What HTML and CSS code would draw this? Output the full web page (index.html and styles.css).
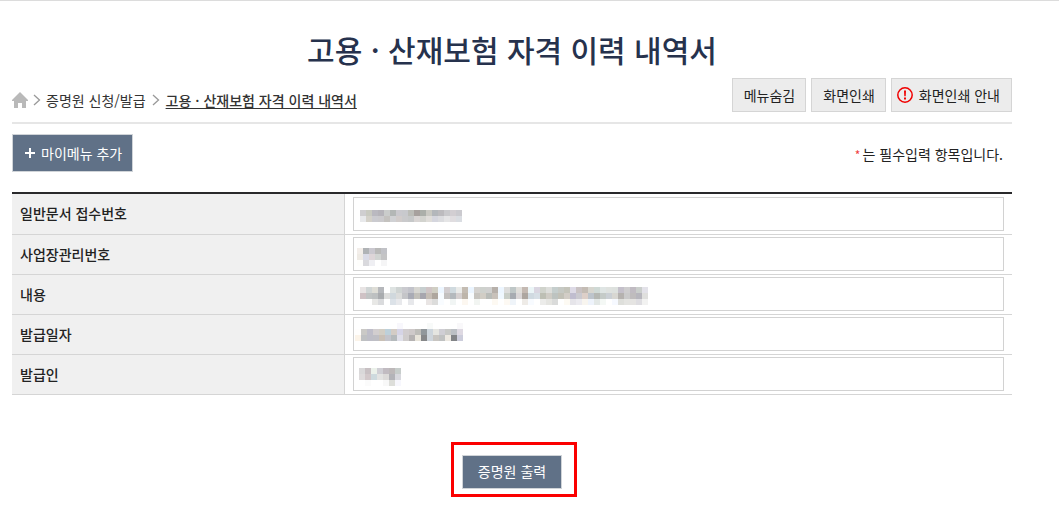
FILE: index.html
```html
<!DOCTYPE html>
<html lang="ko">
<head>
<meta charset="utf-8">
<title>고용 · 산재보험 자격 이력 내역서</title>
<link rel="stylesheet" href="styles.css">
</head>
<body>
<main class="page">
  <h1 class="title">고용 · 산재보험 자격 이력 내역서</h1>
  <header class="bar">
    <nav class="crumbs" aria-label="현재 위치">
      <a class="home" href="#" aria-label="홈">
        <svg width="16" height="16" viewBox="0 0 16 16"><path fill="#b9b9b9" d="M8 0 16 8v1h-2v7h-4v-5H6v5H2V9H0V8z"/></svg>
      </a>
      <svg class="sep" width="8" height="12" viewBox="0 0 8 12"><path d="M1 1 6.500 6 1 11"/></svg>
      <a class="crumb" href="#">증명원 신청/발급</a>
      <svg class="sep" width="8" height="12" viewBox="0 0 8 12"><path d="M1 1 6.500 6 1 11"/></svg>
      <a class="crumb current" href="#">고용 · 산재보험 자격 이력 내역서</a>
    </nav>
    <div class="tools">
      <button class="tool" type="button">메뉴숨김</button>
      <button class="tool" type="button">화면인쇄</button>
      <button class="tool guide" type="button">
        <svg width="16" height="16" viewBox="0 0 16 16"><circle cx="8" cy="8" r="7.200" fill="none" stroke="#f00000" stroke-width="1.500"/><path fill="#f00000" d="M7 3.500h2l-.3 5.800H7.300zM7 10.500h2v2H7z"/></svg>
        화면인쇄 안내
      </button>
    </div>
  </header>
  <div class="subbar">
    <button class="action add" type="button">
      <svg width="10" height="10" viewBox="0 0 10 10"><path fill="#fff" d="M4 0h2v4h4v2H6v4H4V6H0V4h4z"/></svg>
      마이메뉴 추가
    </button>
    <p class="note"><span class="star">*</span>는 필수입력 항목입니다.</p>
  </div>
  <table class="form">
    <tr><th scope="row"><label for="f1">일반문서 접수번호</label></th><td><div class="field"><input id="f1" type="text" readonly><svg class="mosaic m1" data-mosaic="receipt"></svg></div></td></tr>
    <tr><th scope="row"><label for="f2">사업장관리번호</label></th><td><div class="field"><input id="f2" type="text" readonly><svg class="mosaic m2" data-mosaic="site"></svg></div></td></tr>
    <tr><th scope="row"><label for="f3">내용</label></th><td><div class="field"><input id="f3" type="text" readonly><svg class="mosaic m3" data-mosaic="content"></svg></div></td></tr>
    <tr><th scope="row"><label for="f4">발급일자</label></th><td><div class="field"><input id="f4" type="text" readonly><svg class="mosaic m4" data-mosaic="date"></svg></div></td></tr>
    <tr><th scope="row"><label for="f5">발급인</label></th><td><div class="field"><input id="f5" type="text" readonly><svg class="mosaic m5" data-mosaic="issuer"></svg></div></td></tr>
  </table>
  <div class="submit">
    <div class="highlight"><button class="action print" type="button">증명원 출력</button></div>
  </div>
</main>
<script src="mosaic.js"></script>
</body>
</html>
```
FILE: styles.css
```css
* { box-sizing: border-box; }
body {
  margin: 0;
  border-top: 1px solid #dcdcdc;
  background: #fff;
  color: #222;
  font: 14px/20px "Noto Sans CJK KR", sans-serif;
}
button, input { font: inherit; color: inherit; margin: 0; border-radius: 0; }
svg { display: block; flex: none; }
.page { padding: 26px 47px 15px 12px; }
.title {
  margin: 0;
  color: #26324d;
  font-size: 30px;
  line-height: 44px;
  font-weight: 500;
  text-align: center;
}
.bar {
  display: flex;
  justify-content: space-between;
  align-items: flex-start;
  margin-top: 7px;
  padding-bottom: 10px;
  border-bottom: 2px solid #e6e6e6;
}
.crumbs { display: flex; align-items: center; padding-top: 12px; }
.crumb { color: #333; text-decoration: none; }
.current { font-weight: 500; text-decoration: underline; text-underline-offset: 2px; }
.sep { margin: 0 5px; fill: none; stroke: #999; stroke-width: 1.3; }
.crumb + .sep { margin: 0 6px; }
.tools { display: flex; gap: 5px; }
.tool {
  display: flex;
  align-items: center;
  justify-content: center;
  gap: 6px;
  height: 34px;
  padding: 0 10px 0 11px;
  border: 1px solid #d5d5d5;
  background: #ececec;
  white-space: nowrap;
}
.guide { padding: 0 11px 0 5px; }
.subbar { display: flex; justify-content: space-between; align-items: center; margin-top: 10px; }
.action {
  display: flex;
  align-items: center;
  gap: 6px;
  border: 1px solid #d0d4d8;
  background: #607187;
  color: #fff;
  white-space: nowrap;
}
.add { height: 38px; padding: 0 10px 1px 12px; }
.print { height: 34px; padding: 0 15px 2px; }
.note { margin: 3px 9px 0 0; }
.star { color: #f04040; font-size: 12px; margin-right: 2px; }
.form {
  width: 100%;
  margin-top: 20px;
  border-top: 2px solid #29292b;
  border-spacing: 0;
  table-layout: fixed;
}
.form th {
  width: 33.3%;
  padding: 0 8px 2px;
  border-right: 1px solid #d5d5d5;
  border-bottom: 1px solid #d5d5d5;
  background: #f0f0f0;
  font-weight: 500;
  text-align: left;
}
.form td { padding: 2px 8px 3px; border-bottom: 1px solid #d5d5d5; }
.form tr:first-child td { padding-top: 3px; }
.field { position: relative; }
.field input {
  display: block;
  width: 100%;
  height: 34px;
  padding: 0 8px;
  border: 1px solid #d2d2d2;
  background: #fff;
}
.mosaic { position: absolute; pointer-events: none; }
.m1 { left: 7px; top: 13px; }
.m2 { left: 4px; top: 11px; }
.m3 { left: 7px; top: 10px; }
.m4 { left: 2px; top: 6px; }
.m5 { left: 6px; top: 11px; }
.submit { display: flex; justify-content: center; margin-top: 60px; }
.highlight { position: relative; }
.highlight::after {
  content: "";
  position: absolute;
  inset: -13px -15px -8px -11px;
  border: 3px solid #fb0000;
  pointer-events: none;
}
```
FILE: mosaic.js
```js
// Masked field values: rows of 6px cells, one hex colour per cell.
const mosaics = {
  receipt: [
    "cfced0 c9cac1 bab9c0 b6b4ba cacccb b3b7b6 cac9ce c8c9cd bcbdb8 a7a19e abafa9 c9c9c2 b3b7bb bcbbbe c9c9cc d2ced2 cbcacf",
    "e8e9eb d4d1c9 cbcbd0 cbcacd c4c2bf d0d1d4 d1cccb cacacc c6c8c9 d9d5d4 d2d3ce dfddd9 d5d6de dbdcdf e5e5e6 e0dde0 dadde2"
  ],
  site: [
    "f3eeea b0b3b6 cac8cf b9b9b8 c1c2c7",
    "efebe5 dadbe7 ddd5d8 d1d4d2 c4c4c5",
    "fefefc d9d9dd efeff3 ffffff f5f5f6"
  ],
  content: [
    "e8e4e4 d0d5d5 deddd6 b5b7bb ffffff dee3e2 cfd4d3 cacacf c2c3ca d7d6d1 c7cecf cfc4c5 d0cec3 edf6ff d2cdcf d0dadf eaebe9 c4bcb2 ebf5ff d4d2cf ced1cd d0d0cf b7b0aa edf6ff dddddc bfc7c7 e0deda c4b9b2 ebf5f7 dad6e1 d0d3cc dddedb c5cecd c6c9c4 c4c4ba dddae6 c9c2c3 c4bcb4 d7d6cf cfd9d5 dfe5e4 dfe2df dde1de c4c0ca cecdce c0bbc2 cacecb e3e2e9",
    "cfc2c5 c1c4c4 bdc0c1 a9abae dddddc d0d8dd dbdcdb c4c5c8 a9abb5 c2c0ba a7a6ae c5bdb5 aea69e f7fbff c3c0bf b4b9bd d5d0d0 bdb5aa f8fcff c7c5c0 d1cdc5 b9bcb8 c8c1ba f0f8ff cacfc9 a7abb1 dad6d7 ada6a0 d0dae1 d7dfe6 bdbfb4 cfccc5 bdc3c0 c2c1b7 d2cdc6 c0bdcf cac9cf ddcfc8 bdc4cb b5b8b3 c5cbc8 cbd0d5 d8d7d2 b5b2af cacaca bfbcbd b7b6bd dfdfdd",
    "ffffff ffffff e8e8e6 dadbdd ffffff dce2e8 e8e9ec ffffff e7e8eb ffffff ffffff e9e5e4 dcdcdb f9fcff ffffff f1f5f4 ffffff fcf7f0 ffffff f2f5f2 ffffff ffffff fdf9f2 ffffff fdf9f3 eff4f9 ffffff eeebe7 f8fbff ffffff ececea e5e5e1 dadbda ffffff fdfaf3 e6e5ea ecebf0 f8f5ef eef3fb e3e8e6 f4f8f5 ffffff f6f9ff dedfdb e4e4e1 e5e4e2 dedde1 f2f2f1"
  ],
  date: [
    "ffffff ffffff ffffff ffffff ffffff ffffff ffffff f8f7fc ffffff ffffff ffffff ffffff f8faf9 ffffff ffffff ffffff ffffff f9f8fa",
    "fffefd cac9c6 bfbec9 d2cecf d2cec5 bdd0da d3ccc5 d5d4e6 d1cdcf cec9c9 bebdb9 91979b cdd5dc e5e5e1 cfced4 c7c8c6 bcc0c5 ded9e2",
    "fcf4e9 bfc1c3 bebec7 bfbfc5 c9c0b6 c3c4cb b5babc dfdfe9 cfcccc b5b2b2 e8e4da 868789 ced5dc c8c5c1 bfc1c1 ece8e1 828487 cccddb"
  ],
  issuer: [
    "d9d8d9 c8c0c3 ebf1ea d0cfd5 c1bbc1 bdb8b9 c7cdcb",
    "dedbdc d2c8ca cedade e3e3e2 dcdad9 b3b3b8 d8d8de",
    "ffffff fbfbfb ffffff ffffff f8f8f8 dddeda f7f7fd"
  ]
};

const cell = 6;
const ns = "http://www.w3.org/2000/svg";

document.querySelectorAll("[data-mosaic]").forEach((svg) => {
  const rows = mosaics[svg.dataset.mosaic].map((row) => row.split(" "));
  svg.setAttribute("width", rows[0].length * cell);
  svg.setAttribute("height", rows.length * cell);
  rows.forEach((row, y) => row.forEach((color, x) => {
    const rect = document.createElementNS(ns, "rect");
    rect.setAttribute("x", x * cell);
    rect.setAttribute("y", y * cell);
    rect.setAttribute("width", cell);
    rect.setAttribute("height", cell);
    rect.setAttribute("fill", "#" + color);
    svg.append(rect);
  }));
});
```
